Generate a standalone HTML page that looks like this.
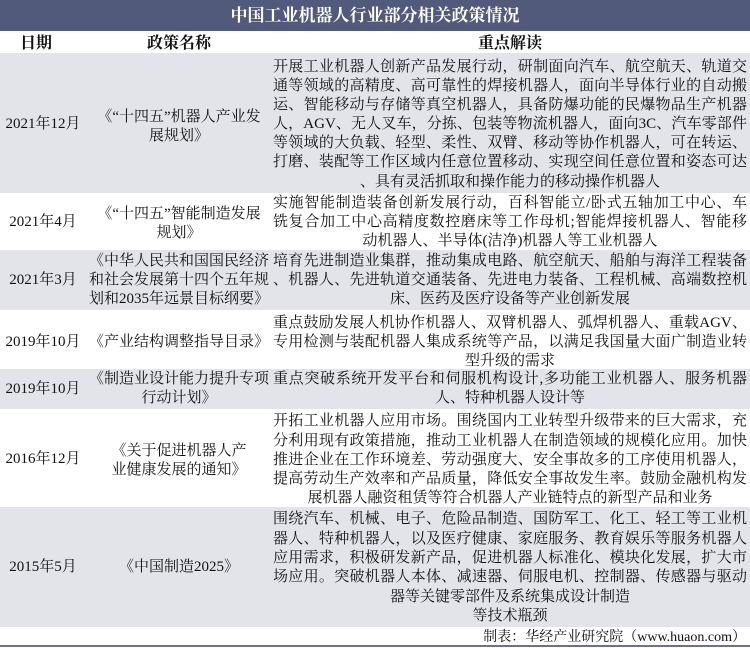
<!DOCTYPE html>
<html><head><meta charset="utf-8"><style>
body{margin:0;width:750px;height:648px;position:relative;overflow:hidden;background:#fff;font-family:"Liberation Serif","Noto Serif CJK SC",serif;color:#111;}
.t{position:absolute;left:0;top:0;width:750px;height:31px;background:#525a7c;color:#fff;font-weight:bold;font-size:17px;text-align:center;line-height:31px;}
.r{position:absolute;left:0;width:750px;}
.g{background:#e2e4ea;}
.l{position:absolute;font-size:15px;line-height:19px;white-space:nowrap;}
.j{left:273px;width:474px;text-align:justify;text-align-last:justify;}
.c{left:273px;width:474px;text-align:center;}
.n{left:88px;width:182px;text-align:center;}
.d{left:0;width:86px;text-align:center;}
.h{position:absolute;top:34px;font-weight:bold;font-size:16px;line-height:20px;}
</style></head><body>
<div class="t">中国工业机器人行业部分相关政策情况</div>
<div class="h" style="left:6px;width:60px;text-align:center">日期</div>
<div class="h" style="left:88px;width:182px;text-align:center">政策名称</div>
<div class="h" style="left:273px;width:474px;text-align:center">重点解读</div>

<div class="r g" style="top:53px;height:140px"></div>
<div class="r g" style="top:250px;height:60px"></div>
<div class="r g" style="top:369px;height:40px"></div>
<div class="r g" style="top:507px;height:120px"></div>

<!-- r1 -->
<div class="l d" style="top:115px">2021年12月</div>
<div class="l n" style="top:108px">《“十四五”机器人产业发</div>
<div class="l n" style="top:127px">展规划》</div>
<div class="l j" style="top:58px">开展工业机器人创新产品发展行动，研制面向汽车、航空航天、轨道交</div>
<div class="l j" style="top:77px">通等领域的高精度、高可靠性的焊接机器人，面向半导体行业的自动搬</div>
<div class="l j" style="top:96px">运、智能移动与存储等真空机器人，具备防爆功能的民爆物品生产机器</div>
<div class="l j" style="top:115px">人，AGV、无人叉车，分拣、包装等物流机器人，面向3C、汽车零部件</div>
<div class="l j" style="top:134px">等领域的大负载、轻型、柔性、双臂、移动等协作机器人，可在转运、</div>
<div class="l j" style="top:153px">打磨、装配等工作区域内任意位置移动、实现空间任意位置和姿态可达</div>
<div class="l c" style="top:173px">、具有灵活抓取和操作能力的移动操作机器人</div>
<!-- r2 -->
<div class="l d" style="top:213px">2021年4月</div>
<div class="l n" style="top:205px">《“十四五”智能制造发展</div>
<div class="l n" style="top:224px">规划》</div>
<div class="l j" style="top:194px">实施智能制造装备创新发展行动，百科智能立/卧式五轴加工中心、车</div>
<div class="l j" style="top:213px">铣复合加工中心高精度数控磨床等工作母机;智能焊接机器人、智能移</div>
<div class="l c" style="top:232px">动机器人、半导体(洁净)机器人等工业机器人</div>
<!-- r3 -->
<div class="l d" style="top:271px">2021年3月</div>
<div class="l n" style="top:252px">《中华人民共和国国民经济</div>
<div class="l n" style="top:271px">和社会发展第十四个五年规</div>
<div class="l n" style="top:290px">划和2035年远景目标纲要》</div>
<div class="l j" style="top:252px">培育先进制造业集群，推动集成电路、航空航天、船舶与海洋工程装备</div>
<div class="l j" style="top:271px">、机器人、先进轨道交通装备、先进电力装备、工程机械、高端数控机</div>
<div class="l c" style="top:290px">床、医药及医疗设备等产业创新发展</div>
<!-- r4 -->
<div class="l d" style="top:333px">2019年10月</div>
<div class="l n" style="top:333px">《产业结构调整指导目录》</div>
<div class="l j" style="top:314px">重点鼓励发展人机协作机器人、双臂机器人、弧焊机器人、重载AGV、</div>
<div class="l j" style="top:333px">专用检测与装配机器人集成系统等产品，以满足我国量大面广制造业转</div>
<div class="l c" style="top:352px">型升级的需求</div>
<!-- r5 -->
<div class="l d" style="top:380px">2019年10月</div>
<div class="l n" style="top:370px">《制造业设计能力提升专项</div>
<div class="l n" style="top:389px">行动计划》</div>
<div class="l j" style="top:370px">重点突破系统开发平台和伺服机构设计,多功能工业机器人、服务机器</div>
<div class="l c" style="top:389px">人、特种机器人设计等</div>
<!-- r6 -->
<div class="l d" style="top:450px">2016年12月</div>
<div class="l n" style="top:442px">《关于促进机器人产</div>
<div class="l n" style="top:461px">业健康发展的通知》</div>
<div class="l j" style="top:412px">开拓工业机器人应用市场。围绕国内工业转型升级带来的巨大需求，充</div>
<div class="l j" style="top:432px">分利用现有政策措施，推动工业机器人在制造领域的规模化应用。加快</div>
<div class="l j" style="top:451px">推进企业在工作环境差、劳动强度大、安全事故多的工序使用机器人，</div>
<div class="l j" style="top:470px">提高劳动生产效率和产品质量，降低安全事故发生率。鼓励金融机构发</div>
<div class="l c" style="top:489px">展机器人融资租赁等符合机器人产业链特点的新型产品和业务</div>
<!-- r7 -->
<div class="l d" style="top:558px">2015年5月</div>
<div class="l n" style="top:558px">《中国制造2025》</div>
<div class="l j" style="top:510px">围绕汽车、机械、电子、危险品制造、国防军工、化工、轻工等工业机</div>
<div class="l j" style="top:530px">器人、特种机器人，以及医疗健康、家庭服务、教育娱乐等服务机器人</div>
<div class="l j" style="top:549px">应用需求，积极研发新产品，促进机器人标准化、模块化发展，扩大市</div>
<div class="l j" style="top:568px">场应用。突破机器人本体、减速器、伺服电机、控制器、传感器与驱动</div>
<div class="l c" style="top:588px">器等关键零部件及系统集成设计制造</div>
<div class="l c" style="top:607px">等技术瓶颈</div>
<!-- footer -->
<div class="l" style="top:628px;right:4px;font-size:14px">制表：华经产业研究院（www.huaon.com）</div>
<div style="position:absolute;left:0;top:645px;width:750px;height:2px;background:#6a7196"></div>
</body></html>
